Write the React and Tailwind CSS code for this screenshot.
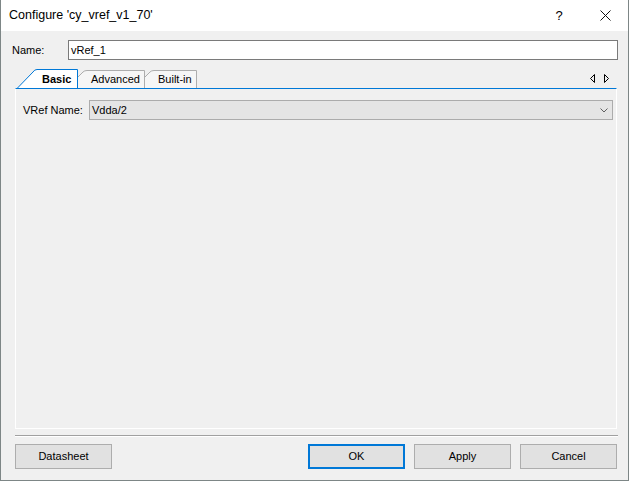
import React from 'react'

const font = { fontFamily: '"Liberation Sans", Arial, sans-serif' }

function Tab({ label, selected, width, offset, className = '' }) {
  // slanted tab shape drawn behind the label
  const path = selected
    ? `M0.5 19 L16 3 Q17.5 0.5 20 0.5 L${width - 0.5} 0.5 L${width - 0.5} 19`
    : `M-11 19 L5 3 Q6.5 1.5 9 1.5 L${width - 0.5} 1.5 L${width - 0.5} 19`
  return (
    <div className={`relative h-[19px] shrink-0 ${className}`} style={{ width }}>
      <svg className="absolute inset-0 overflow-visible" width={width} height="19">
        <path
          d={path}
          fill={selected ? '#ffffff' : '#f6f6f6'}
          stroke={selected ? '#0078d7' : '#adadad'}
          strokeWidth="1"
        />
      </svg>
      <span
        className={`relative block pt-[3px] text-[11px] leading-[14px] text-black ${selected ? 'font-bold' : ''}`}
        style={{ paddingLeft: offset }}
      >
        {label}
      </span>
    </div>
  )
}

function Btn({ children, primary }) {
  return (
    <button
      className={`w-[97px] h-[25px] bg-[#e1e1e1] text-[11px] text-black ${primary ? 'border-2 border-[#0078d7]' : 'border border-[#adadad]'}`}
    >
      {children}
    </button>
  )
}

export default function App() {
  return (
    <div className="w-[629px] h-[481px] flex flex-col border-l border-r border-b border-[#7d8686] bg-[#f0f0f0]" style={font}>
      {/* title bar */}
      <div className="h-[31px] shrink-0 bg-white flex items-center">
        <div className="pl-[8px] flex-1 text-[12.5px] text-black">Configure 'cy_vref_v1_70'</div>
        <div className="w-[46px] h-full flex items-center justify-center text-[13px] text-black">?</div>
        <div className="w-[46px] h-full flex items-center justify-center">
          <svg width="11" height="11" viewBox="0 0 11 11">
            <path d="M0.5 0.5 L10.5 10.5 M10.5 0.5 L0.5 10.5" stroke="#111" strokeWidth="1" />
          </svg>
        </div>
      </div>

      {/* name row */}
      <div className="mt-[9px] flex items-center h-[20px] shrink-0">
        <div className="w-[67px] pl-[11px] text-[11px] text-black">Name:</div>
        <div className="flex-1 mr-[10px] h-[20px] bg-white border border-[#7a7a7a] flex items-center pl-[2px] text-[11px] text-black">
          vRef_1
        </div>
      </div>

      {/* tab strip */}
      <div className="mt-[9px] ml-[14px] mr-[10px] h-[19px] shrink-0 flex items-end justify-between">
        <div className="flex items-end">
          <Tab label="Basic" selected width={61} offset={25} className="ml-[2px] z-20" />
          <Tab label="Advanced" width={67} offset={13} className="z-10" />
          <Tab label="Built-in" width={52} offset={13} />
        </div>
        <div className="flex items-center gap-[9px] mr-[9px] mb-[5px]">
          <svg width="5" height="9" viewBox="0 0 5 9">
            <path d="M4.5 0.5 L0.5 4.5 L4.5 8.5 Z" fill="none" stroke="#000" strokeWidth="1" />
          </svg>
          <svg width="5" height="9" viewBox="0 0 5 9">
            <path d="M0.5 0.5 L4.5 4.5 L0.5 8.5 Z" fill="none" stroke="#000" strokeWidth="1" />
          </svg>
        </div>
      </div>

      {/* tab panel */}
      <div className="flex-1 ml-[14px] mr-[11px] border-t border-t-[#0078d7] border-l border-r border-b border-l-white border-r-white border-b-white bg-[#f0f0f0] pt-[11px]">
        <div className="flex items-center h-[20px]">
          <div className="w-[73px] pl-[7px] text-[11px] text-black">VRef Name:</div>
          <div className="flex-1 mr-[3px] h-[20px] bg-[#e5e5e5] border border-[#acacac] flex items-center justify-between pl-[2px] pr-[4px] text-[11px] text-black">
            <span>Vdda/2</span>
            <svg width="8" height="5" viewBox="0 0 8 5">
              <path d="M0.5 0.5 L4 4 L7.5 0.5" fill="none" stroke="#606060" strokeWidth="1" />
            </svg>
          </div>
        </div>
      </div>

      {/* separator */}
      <div className="mt-[6px] ml-[14px] mr-[10px] h-[2px] shrink-0 border-t border-[#a0a0a0] border-b border-b-white" />

      {/* buttons */}
      <div className="mt-[7px] mb-[11px] ml-[14px] mr-[11px] h-[25px] shrink-0 flex justify-between">
        <Btn>Datasheet</Btn>
        <div className="flex gap-[9px]">
          <Btn primary>OK</Btn>
          <Btn>Apply</Btn>
          <Btn>Cancel</Btn>
        </div>
      </div>
    </div>
  )
}
